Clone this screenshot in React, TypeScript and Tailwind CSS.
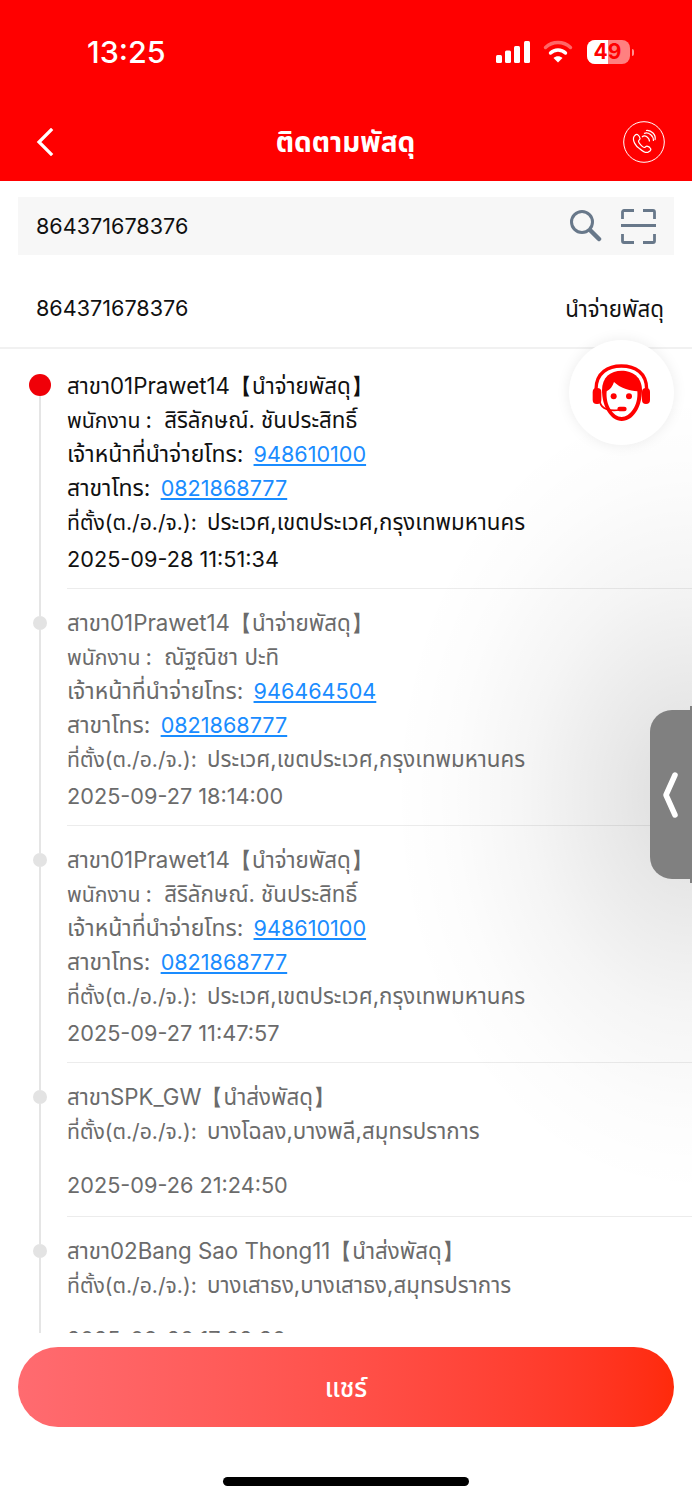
import React from "react";

const FONT = "font-['Inter','Noto_Sans','Noto_Sans_Thai','DejaVu_Sans',sans-serif]";

interface TrackItem {
  branch: string;
  status: string;
  staff?: string;
  courier?: string;
  branchTel?: string;
  location: string;
  time: string;
}

const items: TrackItem[] = [
  { branch: "สาขา01Prawet14", status: "【นำจ่ายพัสดุ】", staff: "สิริลักษณ์. ชันประสิทธิ์", courier: "948610100", branchTel: "0821868777", location: "ประเวศ,เขตประเวศ,กรุงเทพมหานคร", time: "2025-09-28 11:51:34" },
  { branch: "สาขา01Prawet14", status: "【นำจ่ายพัสดุ】", staff: "ณัฐณิชา ปะทิ", courier: "946464504", branchTel: "0821868777", location: "ประเวศ,เขตประเวศ,กรุงเทพมหานคร", time: "2025-09-27 18:14:00" },
  { branch: "สาขา01Prawet14", status: "【นำจ่ายพัสดุ】", staff: "สิริลักษณ์. ชันประสิทธิ์", courier: "948610100", branchTel: "0821868777", location: "ประเวศ,เขตประเวศ,กรุงเทพมหานคร", time: "2025-09-27 11:47:57" },
  { branch: "สาขาSPK_GW", status: "【นำส่งพัสดุ】", location: "บางโฉลง,บางพลี,สมุทรปราการ", time: "2025-09-26 21:24:50" },
  { branch: "สาขา02Bang Sao Thong11", status: "【นำส่งพัสดุ】", location: "บางเสาธง,บางเสาธง,สมุทรปราการ", time: "2025-09-26 17:22:30" },
];

const Line = ({ children, className = "" }: { children: React.ReactNode; className?: string }) => (
  <div className={`h-[34px] leading-[34px] whitespace-pre ${className}`}>{children}</div>
);

const Tel = ({ value }: { value: string }) => (
  <span className="ml-[4px] text-[21.6px] text-[#1a8cff] underline underline-offset-2">{value}</span>
);

const TimelineRow = ({ item, first }: { item: TrackItem; first: boolean }) => {
  const full = Boolean(item.staff);
  return (
    <div className="flex">
      <div className="w-[67px] shrink-0 pl-[29px]">
        <div className="w-[22px] h-full flex flex-col items-center">
          {first ? (
            <div className="h-[25px] shrink-0" />
          ) : (
            <div className="w-[2px] h-[27px] shrink-0 bg-[#e5e5e5]" />
          )}
          {first ? (
            <div className="w-[22px] h-[22px] rounded-full bg-[#f00008] shrink-0" />
          ) : (
            <div className="w-[14px] h-[14px] rounded-full bg-[#e3e3e3] shrink-0" />
          )}
          <div className="w-[2px] flex-1 bg-[#e5e5e5]" />
        </div>
      </div>
      <div className={`flex-1 pb-[12px] border-b border-[#ececec] text-[22.3px] ${first ? "pt-[20px] text-[#111]" : "pt-[17px] text-[#6b6b6b]"}`}>
        <Line>{item.branch}{item.status}</Line>
        {full && (
          <Line>
            <span className="text-[21.2px]">พนักงาน</span><span className="ml-[5px]">:</span> <span className="ml-[6px] text-[22.3px]">{item.staff}</span>
          </Line>
        )}
        {full && (
          <Line>
            <span className="text-[23px]">เจ้าหน้าที่นำจ่ายโทร:</span> <Tel value={item.courier!} />
          </Line>
        )}
        {full && (
          <Line>
            <span className="text-[23px]">สาขาโทร:</span> <Tel value={item.branchTel!} />
          </Line>
        )}
        <Line>
          <span className="text-[21.2px]">ที่ตั้ง(ต./อ./จ.):</span> <span className="ml-[4px]">{item.location}</span>
        </Line>
        {!full && <div className="h-[17px]" />}
        <Line className={`mt-[3px] text-[21.7px] ${full ? "" : "mb-[2px]"}`}>{item.time}</Line>
      </div>
    </div>
  );
};

export default function App() {
  return (
    <div className={`relative w-[692px] h-[1500px] bg-white flex flex-col overflow-hidden ${FONT}`}>
      {/* header */}
      <div className="h-[181px] shrink-0 bg-[#ff0000] text-white flex flex-col">
        <div className="h-[101px] flex items-start justify-between pt-[33px] pl-[87px] pr-[58px]">
          <span className="text-[30.5px] leading-[38px] font-medium">13:25</span>
          <div className="flex items-start gap-[12px] pt-[7px]">
            <svg width="36" height="22" viewBox="0 0 36 22" fill="#fff" className="mt-[1px]">
              <rect x="1" y="14" width="6" height="8" rx="1.5" />
              <rect x="10" y="9.500" width="6" height="12.500" rx="1.5" />
              <rect x="19" y="5" width="6" height="17" rx="1.5" />
              <rect x="29" y="0" width="6" height="22" rx="1.5" />
            </svg>
            <svg width="30" height="23" viewBox="0 0 30 23" fill="none" className="mr-[2px]">
              <path d="M2.500 7.500C9.500 .8 20.500 .8 27.500 7.500" stroke="#ff6666" strokeWidth="3.4" strokeLinecap="round" />
              <path d="M7.500 13C11.500 9 18.500 9 22.500 13" stroke="#fff" strokeWidth="3.4" strokeLinecap="round" />
              <path d="M15 22.500 L10.500 18 C13 15.800 17 15.800 19.500 18 Z" fill="#fff" />
            </svg>
            <div className="flex items-center">
              <div className="relative w-[43px] h-[24px] rounded-[8px] overflow-hidden bg-[#ff8080] text-[#ff0000] text-[21px] leading-[24px] font-bold text-center pr-[2px]">
                <div className="absolute left-0 top-0 h-full w-[21px] bg-white" />
                <span className="relative">49</span>
              </div>
              <div className="w-[2px] h-[7px] ml-[2px] rounded-r bg-[#ff9090]" />
            </div>
          </div>
        </div>
        <div className="flex-1 grid grid-cols-[1fr_auto_1fr] items-center pl-[36px] pr-[27px] pt-[2px]">
          <svg width="18" height="28" viewBox="0 0 18 28" fill="none" stroke="#fff" strokeWidth="3.2" strokeLinecap="square">
            <path d="M15 2 L3 14 L15 26" />
          </svg>
          <span className="text-[28px] font-bold ml-[-10px]">ติดตามพัสดุ</span>
          <svg width="42" height="42" viewBox="0 0 42 42" fill="none" stroke="#fff" strokeWidth="1" className="justify-self-end">
            <circle cx="21" cy="21" r="20.3" />
            <path strokeWidth="1.2" d="M11 15.500c1-1.500 2.500-2.500 3.500-2 1 .7 2.400 3 2.600 4 .1 1-1.600 1.700-1.600 2.800 0 1.500 4 6 5.600 6.200 1.200.1 1.800-1.500 2.800-1.400 1 .1 3.200 1.600 3.800 2.600.5 1-1 2.600-2.400 3.400-2 1-5-.3-8.600-3.400C13 25.700 9 19.500 11 15.500Z" />
            <path strokeWidth="1.200" d="M19 16c1-1 3-1.500 4.500-.5s3 3 3 5M21 12.500c2-1 4.500-.5 6.500 1s3 4 3 6.500M23 9.500c2-.5 5 .5 7 2.500s2.500 5 2 7" />
          </svg>
        </div>
      </div>

      {/* search */}
      <div className="mx-[18px] mt-[16px] h-[58px] shrink-0 bg-[#f7f7f7] flex items-center pl-[18px] pr-[18px]">
        <span className="flex-1 text-[21.6px] text-[#111]">864371678376</span>
        <svg width="32" height="32" viewBox="0 0 32 32" fill="none" stroke="#68788a" className="mr-[19px]">
          <circle cx="12" cy="12" r="10.500" strokeWidth="3" />
          <path d="M20.500 20.500l8.500 8.500" strokeWidth="4.500" strokeLinecap="round" />
        </svg>
        <svg width="35" height="35" viewBox="0 0 35 35" fill="none" stroke="#68788a" strokeWidth="2.800">
          <path d="M1.500 10V3a1.500 1.500 0 0 1 1.500-1.500H13M22 1.500h10A1.500 1.500 0 0 1 33.500 3V10M1.500 25v7A1.500 1.500 0 0 0 3 33.500H13M22 33.500h10a1.500 1.500 0 0 0 1.500-1.500V25" />
          <path d="M0 16.500H35" />
        </svg>
      </div>

      {/* waybill row */}
      <div className="h-[94px] shrink-0 flex items-center justify-between pl-[36px] pr-[28px] pt-[15px] border-b-2 border-[#f1f1f1] text-[#111]">
        <span className="text-[21.6px]">864371678376</span>
        <span className="text-[22.3px]">นำจ่ายพัสดุ</span>
      </div>

      {/* timeline */}
      <div className="h-[984px] shrink-0 overflow-hidden">
        {items.map((item, i) => (
          <TimelineRow key={i} item={item} first={i === 0} />
        ))}
      </div>

      {/* share */}
      <div className="mx-[18px] mt-[14px] h-[80px] shrink-0 rounded-full bg-gradient-to-r from-[#ff6b70] to-[#ff2a0a] flex items-center justify-center text-white text-[26px] font-medium">
        แชร์
      </div>
      <div className="flex-1 flex items-end justify-center pb-[14px]">
        <div className="w-[246px] h-[9px] rounded-full bg-black" />
      </div>

      {/* side shadow */}
      <div className="absolute right-0 top-[400px] w-[346px] h-[800px] pointer-events-none bg-[radial-gradient(ellipse_300px_400px_at_100%_395px,rgba(0,0,0,0.14),rgba(0,0,0,0.09)_25%,rgba(0,0,0,0.04)_55%,rgba(0,0,0,0.01)_80%,rgba(0,0,0,0))]" />

      {/* agent bubble */}
      <div className="absolute left-[569px] top-[340px] w-[105px] h-[105px] rounded-full bg-white shadow-[0_0_14px_rgba(0,0,0,0.08)] flex items-center justify-center">
        <svg width="84" height="84" viewBox="0 0 252 252" className="mt-[3px]">
          <path d="M48 112C48 62 85 42 124 42C165 42 200 62 200 112" fill="none" stroke="#f00" strokeWidth="10" />
          <path d="M66 115C66 75 92 56 125 56C158 56 186 75 186 115C186 165 160 207 125 207C92 207 66 165 66 115Z" fill="#f00" />
          <path d="M80 118C90 113 98 103 102 90C120 108 150 116 172 118C176 160 150 195 125 195C100 195 76 160 80 118Z" fill="#fff" />
          <rect x="38" y="108" width="26" height="48" rx="12" fill="#f00" />
          <rect x="186" y="108" width="24" height="48" rx="12" fill="#f00" />
          <circle cx="101" cy="133" r="9" fill="#f00" />
          <circle cx="147" cy="133" r="9" fill="#f00" />
          <path d="M60 150C64 172 90 178 118 174" fill="none" stroke="#f00" strokeWidth="5" />
          <rect x="112" y="164" width="28" height="14" rx="7" fill="#f00" />
        </svg>
      </div>

      {/* side handle */}
      <div className="absolute right-0 top-[710px] w-[42px] h-[169px] rounded-l-[22px] bg-[#808080] flex items-center pl-[10px]">
        <svg width="20" height="50" viewBox="0 0 20 50" fill="none" stroke="#fff" strokeWidth="5.500" strokeLinecap="round" strokeLinejoin="round">
          <path d="M15 5 L6 25 L15 45" />
        </svg>
      </div>
      <div className="absolute right-0 top-[706px] w-[2px] h-[177px] bg-[#808080]" />
    </div>
  );
}
